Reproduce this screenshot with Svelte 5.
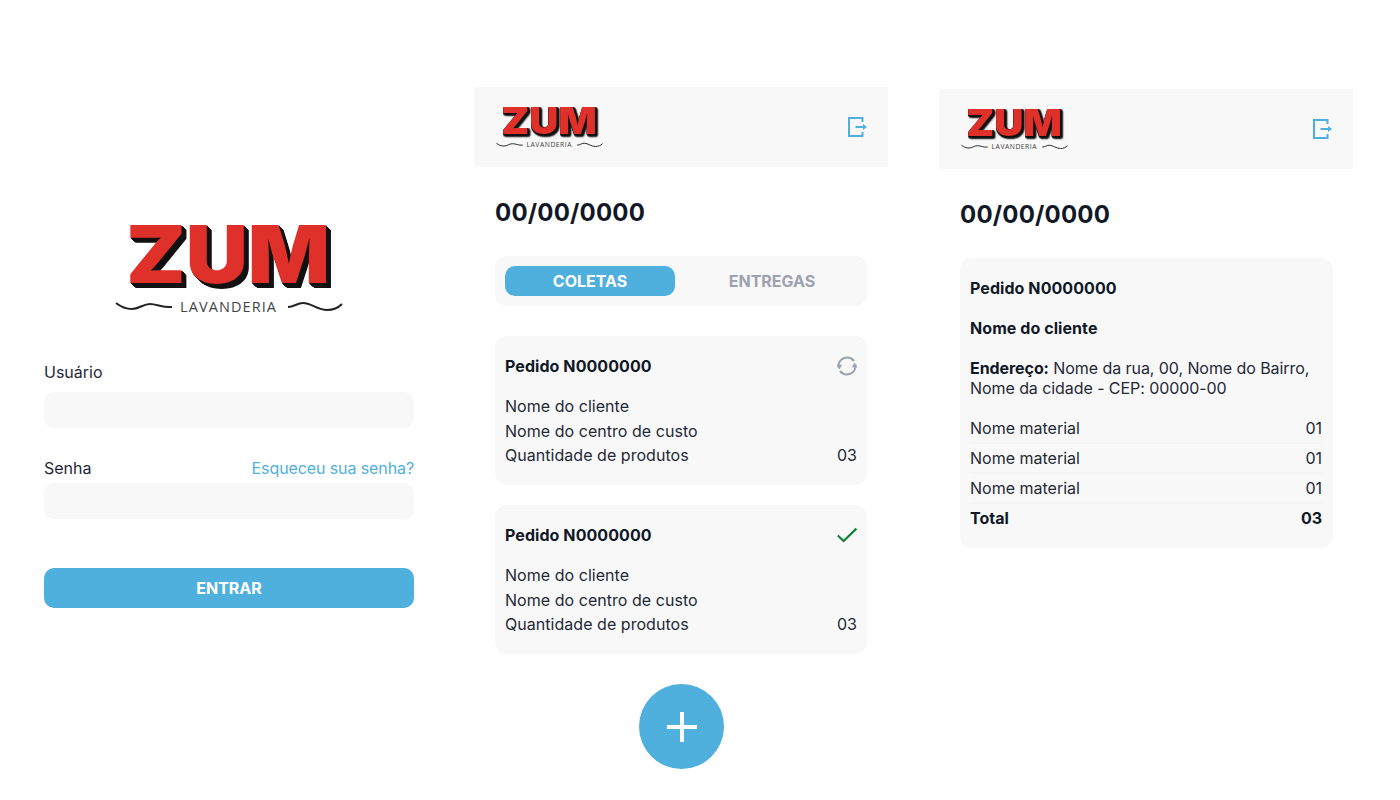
<script lang="ts">
  const rows = ['Nome do cliente', 'Nome do centro de custo'];
  const materials = ['Nome material', 'Nome material', 'Nome material'];
</script>

{#snippet logo()}
  <svg class="logo-art" viewBox="0 0 228 91" aria-label="Zum Lavanderia">
    <text class="zum" x="11" y="59" textLength="204" lengthAdjust="spacingAndGlyphs">ZUM</text>
    <path class="wave" d="M1 79 C6 83 11 85 17 85 C24 85 28 80 35 80 C42 80 48 84 57 83" />
    <path class="wave" d="M173 83 C179 83 182 79 188 79 C196 79 203 86 212 86 C218 86 223 84 227 80" />
    <text class="sub" x="65" y="88" textLength="96">LAVANDERIA</text>
  </svg>
{/snippet}

{#snippet exitIcon()}
  <svg class="exit" viewBox="0 0 20 20" aria-hidden="true">
    <path d="M15.5 5 V1 H2 V19 H15.5 V15" />
    <path d="M8.5 10 H17" />
    <path class="head" d="M16 7 L20 10 L16 13 Z" />
  </svg>
{/snippet}

{#snippet header()}
  <header class="top">
    <div class="logo-small">{@render logo()}</div>
    <button type="button" class="exit-btn" aria-label="Sair">{@render exitIcon()}</button>
  </header>
{/snippet}

{#snippet order(status)}
  <article class="card order">
    <div class="row title">
      <strong>Pedido N0000000</strong>
      {#if status === 'sync'}
        <svg class="status" viewBox="0 0 20 20" aria-hidden="true">
          <path class="sync" d="M1.6 11.5 A8.6 8.6 0 0 1 17 5" />
          <path class="sync" d="M18.4 8.5 A8.6 8.6 0 0 1 3 15" />
          <path class="sync-head" d="M0 8.8 L5.2 8.8 L2.4 13.4 Z" />
          <path class="sync-head" d="M20 11.2 L14.8 11.2 L17.6 6.6 Z" />
        </svg>
      {:else}
        <svg class="status" viewBox="0 0 20 20" aria-hidden="true">
          <path class="done" d="M0.8 10.5 L6.6 16 L19.4 3.6" />
        </svg>
      {/if}
    </div>
    <div class="lines">
      {#each rows as r}
        <div>{r}</div>
      {/each}
      <div class="row"><span>Quantidade de produtos</span><span>03</span></div>
    </div>
  </article>
{/snippet}

<main class="page">
  <section class="screen login">
    <div class="logo-big">{@render logo()}</div>
    <label class="field first" for="user"><span>Usuário</span></label>
    <input id="user" class="input" type="text" />
    <div class="field second">
      <label for="pass">Senha</label>
      <a href="#esqueceu" class="forgot">Esqueceu sua senha?</a>
    </div>
    <input id="pass" class="input" type="password" />
    <button type="button" class="enter">ENTRAR</button>
  </section>

  <section class="screen list">
    {@render header()}
    <div class="body">
      <h1>00/00/0000</h1>
      <div class="tabs">
        <button type="button" class="tab active">COLETAS</button>
        <button type="button" class="tab">ENTREGAS</button>
      </div>
      <div class="orders">
        {@render order('sync')}
        {@render order('done')}
      </div>
      <button type="button" class="fab" aria-label="Adicionar">
        <svg viewBox="0 0 30 30" aria-hidden="true"><path d="M15 0 V30 M0 15 H30" /></svg>
      </button>
    </div>
  </section>

  <section class="screen detail">
    {@render header()}
    <div class="body wide">
      <h1>00/00/0000</h1>
      <article class="card info">
        <p class="strong">Pedido N0000000</p>
        <p class="strong">Nome do cliente</p>
        <p class="address"><strong>Endereço:</strong> Nome da rua, 00, Nome do Bairro, Nome da cidade - CEP: 00000-00</p>
        <div class="materials">
          {#each materials as m}
            <div class="row item"><span>{m}</span><span>01</span></div>
          {/each}
          <div class="row item total"><span>Total</span><span>03</span></div>
        </div>
      </article>
    </div>
  </section>
</main>

<style>
  :global(body) {
    margin: 0;
    background: #fff;
    color: #111827;
    font-family: Inter, "Liberation Sans", sans-serif;
    font-size: 16px;
  }

  .page {
    display: flex;
    align-items: flex-start;
    width: 1400px;
    height: 800px;
    overflow: hidden;
    padding-left: 23px;
    box-sizing: border-box;
  }

  .screen {
    width: 414px;
    flex: none;
  }

  .login {
    padding: 224px 23px 0 21px;
    box-sizing: border-box;
  }

  .list {
    margin: 87px 0 0 37px;
  }

  .detail {
    margin: 89px 0 0 51px;
  }

  .logo-big {
    width: 228px;
    height: 91px;
    margin-left: 71px;
  }

  .logo-small {
    width: 107px;
    height: 43px;
  }

  .logo-art {
    display: block;
    width: 100%;
    height: 100%;
    overflow: visible;
  }

  .zum {
    font-family: Inter, sans-serif;
    font-size: 80px;
    font-weight: 900;
    fill: #e0302a;
    filter: drop-shadow(1.2px 1px 0 #111) drop-shadow(1.2px 1px 0 #111) drop-shadow(1.2px 1px 0 #111) drop-shadow(1.2px 1px 0 #111) drop-shadow(1.2px 1px 0 #111);
  }

  .sub {
    font-family: "Open Sans", sans-serif;
    font-size: 14.5px;
    font-weight: 400;
    fill: #444;
  }

  .wave {
    fill: none;
    stroke: #222;
    stroke-width: 2px;
  }

  .field {
    display: flex;
    justify-content: space-between;
    align-items: center;
    height: 20px;
    line-height: 20px;
    color: #1f2937;
  }

  .field.first {
    margin-top: 47px;
    margin-bottom: 10px;
  }

  .field.second {
    margin-top: 30px;
    margin-bottom: 5px;
  }

  .forgot {
    color: #4fafdd;
    text-decoration: none;
    letter-spacing: -0.1px;
  }

  .input {
    display: block;
    width: 100%;
    height: 36px;
    padding: 0 12px;
    box-sizing: border-box;
    border: 0;
    border-radius: 10px;
    background: #f8f8f8;
    outline: none;
  }

  .enter {
    display: block;
    width: 100%;
    height: 40px;
    margin-top: 49px;
    border: 0;
    border-radius: 10px;
    background: #4fafdd;
    color: #fff;
    font: 700 16px Inter, sans-serif;
  }

  .top {
    display: flex;
    justify-content: space-between;
    align-items: center;
    height: 80px;
    padding: 0 21px 0 22px;
    box-sizing: border-box;
    background: #f8f8f8;
  }

  .exit-btn {
    display: flex;
    padding: 0;
    border: 0;
    background: none;
  }

  .exit {
    width: 20px;
    height: 20px;
    overflow: visible;
    fill: none;
    stroke: #4fafdd;
    stroke-width: 2px;
  }

  .exit .head {
    fill: #4fafdd;
    stroke: none;
  }

  .body {
    display: flex;
    flex-direction: column;
    padding: 0 21px;
  }

  .body.wide {
    padding-right: 20px;
  }

  h1 {
    margin: 31px 0 28px;
    font-size: 24px;
    font-weight: 700;
    line-height: 30px;
    letter-spacing: 0.2px;
    color: #111827;
  }

  .tabs {
    display: grid;
    grid-template-columns: 170px 170px;
    column-gap: 12px;
    height: 50px;
    padding: 10px;
    box-sizing: border-box;
    border-radius: 12px;
    background: #f8f8f8;
  }

  .tab {
    height: 30px;
    padding: 0;
    border: 0;
    border-radius: 10px;
    background: none;
    color: #9ca3af;
    font: 700 16px Inter, sans-serif;
  }

  .tab.active {
    background: #4fafdd;
    color: #fff;
  }

  .orders {
    display: flex;
    flex-direction: column;
    gap: 20px;
    margin-top: 30px;
  }

  .card {
    padding: 10px;
    border-radius: 12px;
    background: #f8f8f8;
  }

  .order {
    height: 149px;
    box-sizing: border-box;
  }

  .row {
    display: flex;
    justify-content: space-between;
    align-items: center;
  }

  .title {
    height: 40px;
    margin-bottom: 8px;
  }

  .title strong,
  .strong {
    font-weight: 700;
    letter-spacing: 0.07px;
  }

  .status {
    width: 20px;
    height: 20px;
    overflow: visible;
  }

  .sync {
    fill: none;
    stroke: #9ca3af;
    stroke-width: 2.2px;
  }

  .sync-head {
    fill: #9ca3af;
  }

  .done {
    fill: none;
    stroke: #15803d;
    stroke-width: 2.2px;
  }

  .lines {
    line-height: 24.5px;
    letter-spacing: 0.04px;
    color: #1f2937;
  }

  .fab {
    display: flex;
    justify-content: center;
    align-items: center;
    align-self: center;
    width: 85px;
    height: 85px;
    margin-top: 30px;
    padding: 0;
    border: 0;
    border-radius: 50%;
    background: #4fafdd;
  }

  .fab svg {
    width: 30px;
    height: 30px;
    margin: 1px 0 0 1px;
    fill: none;
    stroke: #fff;
    stroke-width: 4px;
  }

  .info {
    padding: 20px 11px 16px 10px;
    line-height: 20px;
    color: #1f2937;
  }

  .info p {
    margin: 0 0 20px;
  }

  .info .strong,
  .info strong {
    color: #111827;
  }

  .info .address {
    margin-bottom: 16px;
    letter-spacing: -0.07px;
  }

  .item {
    height: 30px;
    border-bottom: 2px solid #f4f4f4;
    box-sizing: border-box;
  }

  .total {
    height: 28px;
    border-bottom: 0;
    font-weight: 700;
    color: #111827;
  }
</style>
